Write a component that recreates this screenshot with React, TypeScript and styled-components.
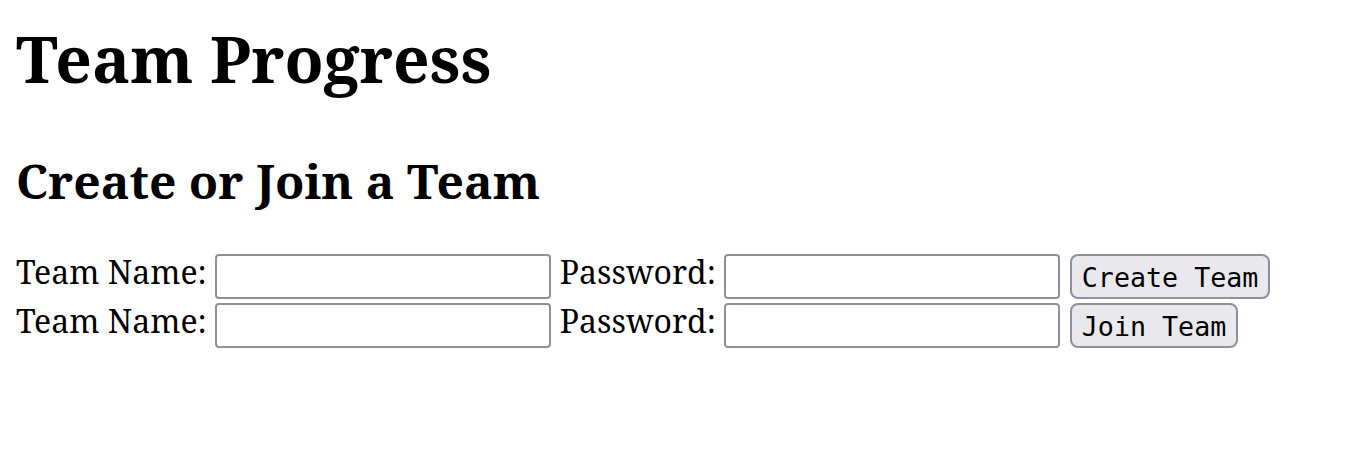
import React from "react";
import styled, { createGlobalStyle } from "styled-components";

const Global = createGlobalStyle`
  html, body { margin: 0; padding: 0; background: #fff; }
  body { font-family: "Noto Serif", "DejaVu Serif", serif; color: #000; }
`;

const Page = styled.div`
  padding: 15px 16px 0 16px;
`;

const Title = styled.h1`
  margin: 0;
  font-size: 64px;
  line-height: 87px;
  font-weight: 700;
`;

const Subtitle = styled.h2`
  margin: 46px 0 0 0;
  font-size: 48px;
  line-height: 65px;
  font-weight: 700;
`;

const Forms = styled.div`
  margin-top: 41px;
  display: flex;
  flex-direction: column;
  gap: 4px;
`;

const Row = styled.form`
  display: flex;
  align-items: flex-start;
  margin: 0;
`;

const Label = styled.label`
  font-size: 32px;
  line-height: 36px;
  margin-right: 8px;
`;

const Field = styled.input`
  box-sizing: border-box;
  width: 336px;
  height: 45px;
  margin-right: 9px;
  border: 2px solid #8f8f9d;
  border-radius: 4px;
  background: #fff;
  padding: 0 4px;
  font-size: 26px;
  outline: none;
`;

const Button = styled.button`
  box-sizing: border-box;
  height: 45px;
  padding: 2px 10px 0 10px;
  border: 2px solid #8f8f9d;
  border-radius: 8px;
  background: #e9e9ed;
  color: #000;
  font-family: "DejaVu Sans Mono", monospace;
  font-size: 26.67px;
  margin-left: 1px;
`;

export default function App() {
  return (
    <>
      <Global />
      <Page>
        <Title>Team Progress</Title>
        <Subtitle>Create or Join a Team</Subtitle>
        <Forms>
          <Row onSubmit={(e) => e.preventDefault()}>
            <Label>Team Name:</Label>
            <Field type="text" />
            <Label>Password:</Label>
            <Field type="password" />
            <Button type="submit">Create Team</Button>
          </Row>
          <Row onSubmit={(e) => e.preventDefault()}>
            <Label>Team Name:</Label>
            <Field type="text" />
            <Label>Password:</Label>
            <Field type="password" />
            <Button type="submit">Join Team</Button>
          </Row>
        </Forms>
      </Page>
    </>
  );
}
